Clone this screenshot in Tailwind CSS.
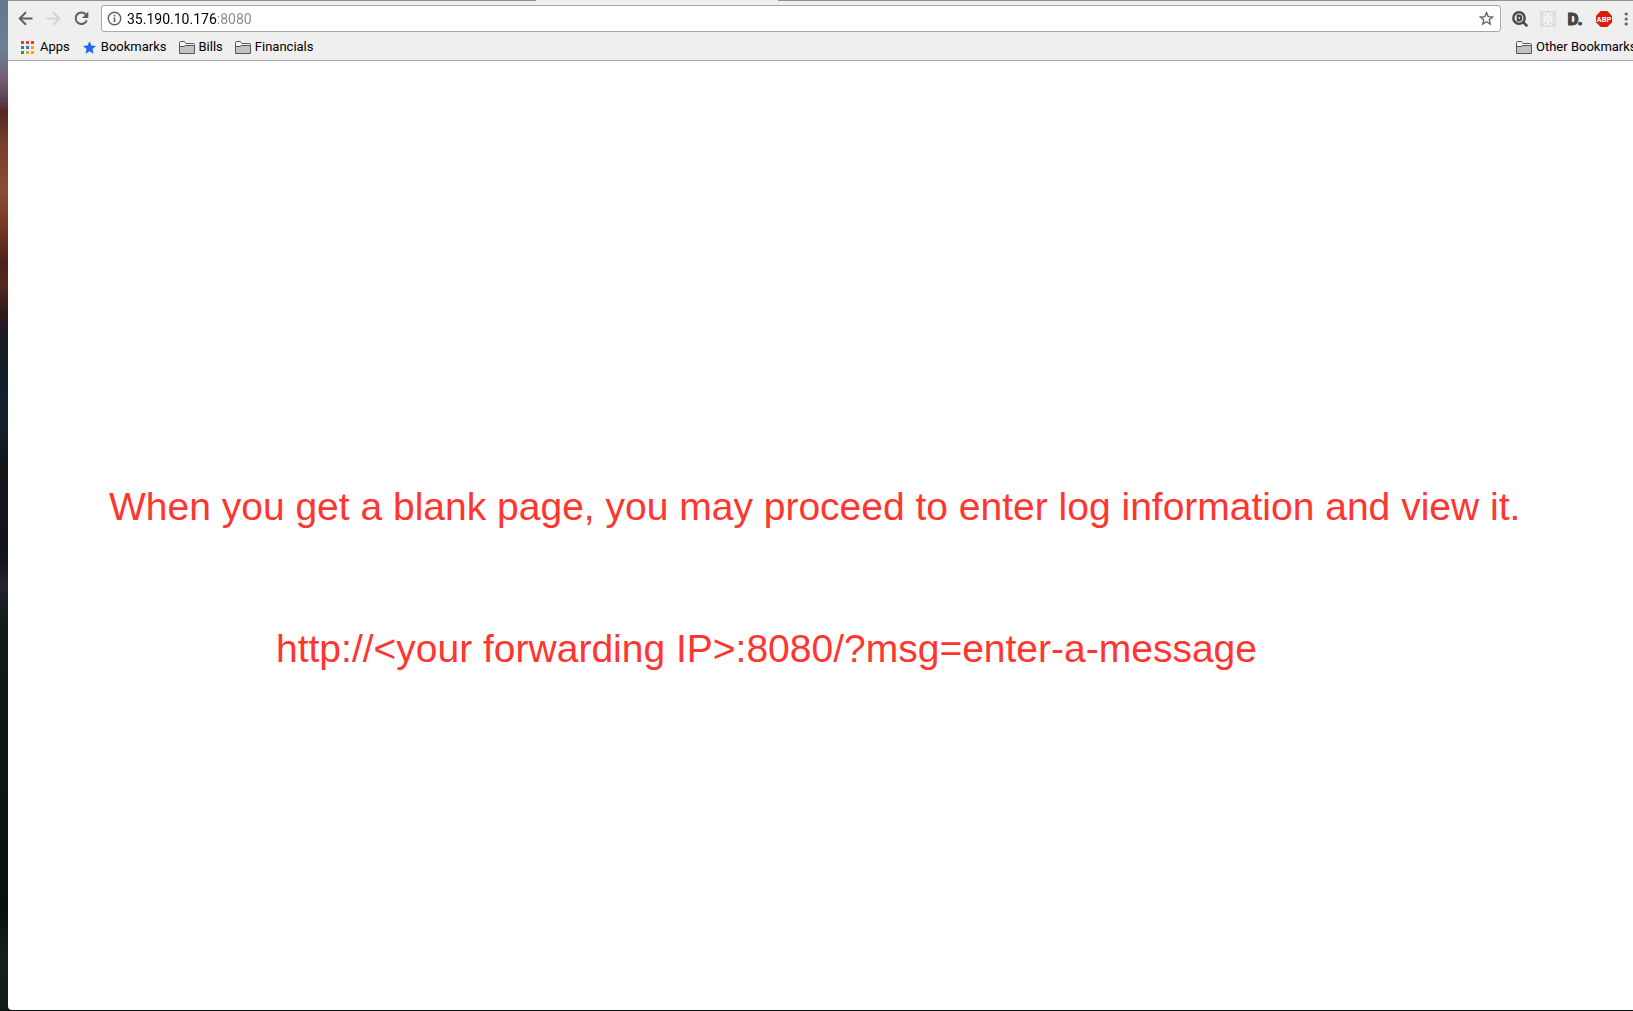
<!DOCTYPE html>
<html lang="en">
<head>
<meta charset="utf-8">
<title>35.190.10.176:8080</title>
<script src="https://cdn.jsdelivr.net/npm/@tailwindcss/browser@4"></script>
</head>
<body class="flex h-screen overflow-hidden bg-[#0b1110] pb-px font-['Roboto',sans-serif] text-[13px] text-black">
<!-- Desktop wallpaper strip -->
<div class="w-2 shrink-0 bg-[linear-gradient(to_bottom,#62788c_0%,#6c7f93_5%,#715d70_8%,#5a3d4e_10%,#552824_11%,#753e2b_14%,#8c4c34_19%,#74331f_23%,#4b211c_26%,#55281e_28%,#301a1e_31%,#1c1a22_33%,#131e29_36%,#14222c_42%,#121519_46%,#16131a_51%,#10151a_55%,#22242a_58%,#121b1c_62%,#0f1715_72%,#0c1410_82%,#091013_90%,#18201a_95%,#101b14_100%)]"></div>

<div class="flex min-w-0 flex-1 flex-col overflow-hidden rounded-bl-[4px] bg-white">
  <header class="shrink-0 border-b border-[#a9a9a9] bg-[#efefef]">
    <div class="flex h-px">
      <div class="w-[528px] bg-[#929296]"></div>
      <div class="w-[242px]"></div>
      <div class="flex-1 bg-[#929296]"></div>
    </div>

    <!-- Toolbar -->
    <div class="flex h-[35px] items-center pl-[7px]">
      <button aria-label="Back" class="flex h-5 w-7 items-center pl-[3px]">
        <svg class="size-[15px]" viewBox="0 0 15 15" fill="none" stroke="#5d6066" stroke-width="2"><path d="M14.5 7.5H1.8M8 1.2L1.7 7.5L8 13.8"/></svg>
      </button>
      <button aria-label="Forward" disabled class="flex h-5 w-7 items-center pl-[3px]">
        <svg class="size-[15px]" viewBox="0 0 15 15" fill="none" stroke="#d3d3d4" stroke-width="2"><path d="M.5 7.5H13.2M7 1.2L13.3 7.5L7 13.8"/></svg>
      </button>
      <button aria-label="Reload" class="flex h-5 w-7 items-center pl-[3px]">
        <svg class="size-[15px]" viewBox="0 0 15 15"><path d="M12.8 9.4A5.8 5.8 0 1 1 11.8 3.4" fill="none" stroke="#5d6066" stroke-width="2"/><path d="M14.3 .6V6.9H8Z" fill="#5d6066"/></svg>
      </button>
      <label class="ml-0.5 flex h-[27px] min-w-0 flex-1 items-center rounded-[3px] border border-[#a9a9a9] bg-white pl-[5px] pr-1.5">
        <svg class="size-[15px] shrink-0" viewBox="0 0 15 15"><circle cx="7.5" cy="7.5" r="6.2" fill="none" stroke="#5d6066" stroke-width="1.4"/><path d="M6.7 6.5h1.6v4.6H6.7zM6.7 3.8h1.6v1.6H6.7z" fill="#5d6066"/></svg>
        <input aria-label="Address" type="text" value="35.190.10.176:8080" class="ml-[5px] min-w-0 flex-1 bg-[linear-gradient(to_right,#000_90px,#868686_90px)] bg-clip-text text-sm text-transparent outline-none">
        <button aria-label="Bookmark this page" class="size-[15px] shrink-0">
          <svg class="size-[15px]" viewBox="0 0 15 15" fill="none" stroke="#5d6066" stroke-width="1.3"><path d="M7.5 1.6L9.2 5.6L13.6 6L10.3 8.8L11.3 13.1L7.5 10.8L3.7 13.1L4.7 8.8L1.4 6L5.8 5.6Z"/></svg>
        </button>
      </label>
      <div class="flex w-[132px] shrink-0 items-center gap-3 pl-[11px]">
        <button aria-label="Search extension" class="size-4 shrink-0">
          <svg class="size-4" viewBox="0 0 16 16"><circle cx="7" cy="7" r="5.7" fill="#efefef" stroke="#494a4c" stroke-width="2.4"/><path d="M11 11L15.3 15.3" stroke="#494a4c" stroke-width="2.6"/><path d="M4.6 3.6H7Q10.3 3.6 10.3 7T7 10.4H4.6Z" fill="#494a4c"/><path d="M6.6 5.8v2.4q1.4 0 1.4-1.2T6.6 5.8Z" fill="#efefef"/></svg>
        </button>
        <button aria-label="React tools" class="size-4 shrink-0">
          <svg class="size-4" viewBox="0 0 16 16"><path d="M0 0h16v16H0z" fill="#dcdcdc"/><g fill="none" stroke="#fafafa"><ellipse cx="8" cy="8" rx="6.6" ry="2.5"/><ellipse cx="8" cy="8" rx="6.6" ry="2.5" transform="rotate(60 8 8)"/><ellipse cx="8" cy="8" rx="6.6" ry="2.5" transform="rotate(120 8 8)"/></g><circle cx="8" cy="8" r="1.3" fill="#fafafa"/></svg>
        </button>
        <button aria-label="D extension" class="size-4 shrink-0">
          <svg class="size-4 overflow-visible" viewBox="0 0 16 16"><text x="-.4" y="14" font-family="Roboto" font-weight="900" font-size="17" fill="#434446" stroke="#434446" stroke-width=".9">D.</text></svg>
        </button>
        <button aria-label="Adblock Plus" class="size-4 shrink-0">
          <svg class="size-4" viewBox="0 0 16 16"><path d="M4.7 0h6.6L16 4.7v6.6L11.3 16H4.7L0 11.3V4.7Z" fill="#d8200c"/><text x="8" y="10.8" text-anchor="middle" font-family="Roboto" font-weight="700" font-size="7.6" fill="#fff">ABP</text></svg>
        </button>
        <button aria-label="Menu" class="h-4 w-1 shrink-0">
          <svg class="h-4 w-1" viewBox="0 0 4 16" fill="#5d6066"><circle cx="2.2" cy="3" r="1.6"/><circle cx="2.2" cy="8" r="1.6"/><circle cx="2.2" cy="13" r="1.6"/></svg>
        </button>
      </div>
    </div>

    <!-- Bookmarks bar -->
    <nav class="flex h-6 items-start pt-px pl-[13px]">
      <a href="#" class="flex h-5 items-center gap-[6px]">
        <svg class="size-[13px]" viewBox="0 0 13 13"><path d="M0 0h3v3H0zM5 0h3v3H5zM10 0h3v3h-3z" fill="#ee3a34"/><path d="M0 5h3v3H0zM0 10h3v3H0z" fill="#2f9150"/><path d="M5 5h3v3H5z" fill="#2b7de9"/><path d="M10 5h3v3h-3zM5 10h3v3H5zM10 10h3v3h-3z" fill="#fba40c"/></svg>
        Apps</a>
      <a href="#" class="ml-[13px] flex h-5 items-center gap-[5px]">
        <svg class="size-[13px]" viewBox="0 0 13 13"><path d="M6.5 .2L8.4 4.6L13 5L9.5 8.1L10.5 12.8L6.5 10.3L2.5 12.8L3.5 8.1L0 5L4.6 4.6Z" fill="#2068f0"/></svg>
        Bookmarks</a>
      <a href="#" class="ml-3 flex h-5 items-center gap-1">
        <svg class="h-[13px] w-4" viewBox="0 0 16 13"><path d="M.5 12.5V1.5Q.5 .5 1.5 .5H5.5L7 2.5H14.5Q15.5 2.5 15.5 3.5V12.5Z" fill="#f4f4f4" stroke="#57585a"/><path d="M1 5.5H4.8L6.5 4.5H15V12H1Z" fill="#c2c2c2"/><path d="M1 5.5H5L6.5 4.5H15" fill="none" stroke="#57585a"/></svg>
        Bills</a>
      <a href="#" class="ml-3 flex h-5 items-center gap-1">
        <svg class="h-[13px] w-4" viewBox="0 0 16 13"><path d="M.5 12.5V1.5Q.5 .5 1.5 .5H5.5L7 2.5H14.5Q15.5 2.5 15.5 3.5V12.5Z" fill="#f4f4f4" stroke="#57585a"/><path d="M1 5.5H4.8L6.5 4.5H15V12H1Z" fill="#c2c2c2"/><path d="M1 5.5H5L6.5 4.5H15" fill="none" stroke="#57585a"/></svg>
        Financials</a>
      <div class="ml-auto w-[117px] overflow-hidden">
        <a href="#" class="flex h-5 items-center gap-1 whitespace-nowrap">
        <svg class="h-[13px] w-4 shrink-0" viewBox="0 0 16 13"><path d="M.5 12.5V1.5Q.5 .5 1.5 .5H5.5L7 2.5H14.5Q15.5 2.5 15.5 3.5V12.5Z" fill="#f4f4f4" stroke="#57585a"/><path d="M1 5.5H4.8L6.5 4.5H15V12H1Z" fill="#c2c2c2"/><path d="M1 5.5H5L6.5 4.5H15" fill="none" stroke="#57585a"/></svg>
        Other Bookmarks</a>
      </div>
    </nav>
  </header>

  <main class="flex flex-1 flex-col justify-center gap-[94px] pt-[84px] font-['Liberation_Sans',sans-serif] text-[39px] leading-[48px] whitespace-nowrap text-[#ff352f]">
    <p class="pl-[101px]">When you get a blank page, you may proceed to enter log information and view it.</p>
    <p class="pl-[268px]">http://&lt;your forwarding IP&gt;:8080/?msg=enter-a-message</p>
  </main>
</div>
</body>
</html>
